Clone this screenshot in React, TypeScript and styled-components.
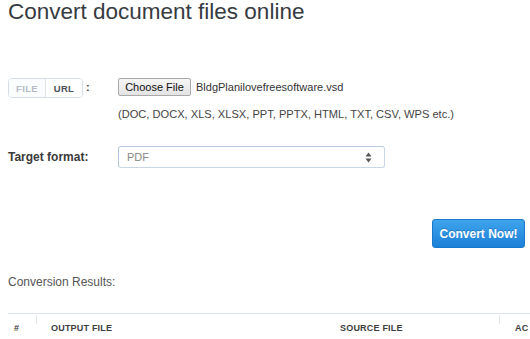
import React from 'react'
import styled, { createGlobalStyle } from 'styled-components'

const GlobalStyle = createGlobalStyle`
  html, body {
    margin: 0;
    padding: 0;
    background: #ffffff;
    overflow: hidden;
  }
  body {
    font-family: 'Liberation Sans', Arial, sans-serif;
    color: #333;
  }
`

const formats = '(DOC, DOCX, XLS, XLSX, PPT, PPTX, HTML, TXT, CSV, WPS etc.)'

const columns = [
  { label: '#', width: 29, divider: true, pad: 6 },
  { label: 'Output File', width: 289, divider: false, pad: 14 },
  { label: 'Source File', width: 174, divider: true, pad: 14 },
  { label: 'Ac', width: 30, divider: false, pad: 15 },
]

const App = () => {
  return (
    <StyledPage>
      <GlobalStyle />
      <Title>Convert document files online</Title>

      <FormRow>
        <LabelCell>
          <Toggle>
            <ToggleOption active={false}>FILE</ToggleOption>
            <ToggleOption active>URL</ToggleOption>
          </Toggle>
          <Colon>:</Colon>
        </LabelCell>
        <FieldCell>
          <FileLine>
            <ChooseButton>Choose File</ChooseButton>
            <FileName>BldgPlanilovefreesoftware.vsd</FileName>
          </FileLine>
          <Formats>{formats}</Formats>
        </FieldCell>
      </FormRow>

      <TargetRow>
        <FormLabel>Target format:</FormLabel>
        <Select>
          <span>PDF</span>
          <Arrows>
            <svg width="7" height="11" viewBox="0 0 7 11">
              <path d="M3.5 0.5 L6.5 4.5 L0.5 4.5 Z" fill="#555" />
              <path d="M3.5 10.5 L6.5 6.5 L0.5 6.5 Z" fill="#555" />
            </svg>
          </Arrows>
        </Select>
      </TargetRow>

      <Actions>
        <ConvertButton>Convert Now!</ConvertButton>
      </Actions>

      <ResultsTitle>Conversion Results:</ResultsTitle>

      <TableHead>
        {columns.map((c) => (
          <HeadCell
            key={c.label}
            divider={c.divider}
            pad={c.pad}
            style={{ width: c.width }}
          >
            {c.label}
          </HeadCell>
        ))}
      </TableHead>
    </StyledPage>
  )
}

const StyledPage = styled.div`
  padding: 0 5px 0 8px;
  width: 517px;
`

const Title = styled.h1`
  margin: 0;
  font-size: 22.5px;
  line-height: 24px;
  font-weight: normal;
  color: #363b42;
`

const FormRow = styled.div`
  display: flex;
  margin-top: 54px;
`

const LabelCell = styled.div`
  width: 110px;
  display: flex;
  align-items: flex-start;
`

const Toggle = styled.div`
  display: flex;
  height: 18px;
  border: 1px solid #d5dde6;
  border-radius: 4px;
  overflow: hidden;
`

const ToggleOption = styled.span<{ active: boolean }>`
  display: flex;
  align-items: center;
  justify-content: center;
  width: 36px;
  font-size: 9.5px;
  font-weight: bold;
  letter-spacing: 0.3px;
  color: ${(p) => (p.active ? '#4b5057' : '#b3bcc7')};
  background: ${(p) => (p.active ? '#ffffff' : '#fbfcfd')};
  & + & {
    border-left: 1px solid #dfe5ec;
  }
`

const Colon = styled.span`
  margin-left: 3px;
  font-size: 11px;
  font-weight: bold;
  line-height: 18px;
  color: #444;
`

const FieldCell = styled.div`
  display: flex;
  flex-direction: column;
`

const FileLine = styled.div`
  display: flex;
  align-items: center;
  height: 18px;
`

const ChooseButton = styled.span`
  box-sizing: border-box;
  display: inline-flex;
  align-items: center;
  justify-content: center;
  width: 73px;
  height: 18px;
  font-size: 11px;
  color: #111;
  background: linear-gradient(#f6f6f6, #e3e3e3);
  border: 1px solid #a9a9a9;
  border-radius: 2px;
`

const FileName = styled.span`
  margin-left: 5px;
  font-size: 11px;
  color: #333;
`

const Formats = styled.div`
  margin-top: 11px;
  font-size: 11.1px;
  line-height: 14px;
  color: #444;
`

const TargetRow = styled.div`
  display: flex;
  align-items: center;
  margin-top: 25px;
`

const FormLabel = styled.div`
  width: 110px;
  font-size: 12px;
  font-weight: bold;
  color: #3a3a3a;
`

const Select = styled.div`
  box-sizing: border-box;
  display: flex;
  align-items: center;
  justify-content: space-between;
  width: 267px;
  height: 22px;
  padding: 0 12px 0 8px;
  font-size: 11px;
  color: #888;
  border: 1px solid #c9d6e4;
  border-top-color: #b8cbe2;
  border-left-color: #b3c7df;
  border-radius: 3px;
`

const Arrows = styled.span`
  display: flex;
`

const Actions = styled.div`
  display: flex;
  justify-content: flex-end;
  margin-top: 51px;
`

const ConvertButton = styled.button`
  width: 93px;
  height: 29px;
  padding: 0;
  font-family: 'Liberation Sans', Arial, sans-serif;
  font-size: 12px;
  font-weight: bold;
  color: #fff;
  text-shadow: 0 -1px 0 rgba(0, 0, 0, 0.2);
  background: linear-gradient(#3fa4ec, #1b80d8);
  border: 1px solid #1a78cc;
  border-radius: 3px;
`

const ResultsTitle = styled.div`
  margin-top: 27px;
  font-size: 12px;
  line-height: 14px;
  color: #555;
`

const TableHead = styled.div`
  display: flex;
  width: 522px;
  margin-top: 24px;
  border-top: 1px solid #dde3e9;
`

const HeadCell = styled.div<{ divider: boolean; pad: number }>`
  position: relative;
  box-sizing: border-box;
  flex: none;
  padding: 9px 0 4px ${(p) => p.pad}px;
  font-size: 9px;
  line-height: 11px;
  font-weight: bold;
  text-transform: uppercase;
  letter-spacing: 0.2px;
  white-space: nowrap;
  color: #3d3d3d;
  &::after {
    content: '';
    display: ${(p) => (p.divider ? 'block' : 'none')};
    position: absolute;
    top: 1px;
    right: 0;
    width: 1px;
    height: 9px;
    background: #e3e7eb;
  }
`

export default App
